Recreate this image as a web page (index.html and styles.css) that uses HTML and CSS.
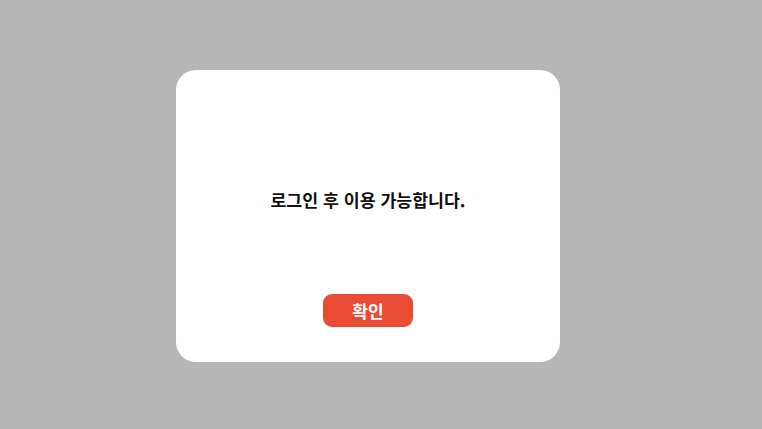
FILE: index.html
```html
<!DOCTYPE html>
<html lang="ko">
<head>
    <meta charset="UTF-8">
    <meta name="viewport" content="width=device-width, initial-scale=1.0">
    <title>알림</title>
    <link rel="stylesheet" href="styles.css">
</head>
<body>
    <div class="overlay">
        <div class="modal">
            <p class="message">로그인 후 이용 가능합니다.</p>
            <button class="confirm">확인</button>
        </div>
    </div>
</body>
</html>
```

FILE: styles.css
```css
html, body {
    margin: 0;
    height: 100%;
}
body {
    font-family: "Noto Sans CJK KR", "Noto Sans", sans-serif;
    background-color: #b7b7b7;
}
.overlay {
    height: 100%;
    display: flex;
    align-items: flex-start;
    padding: 70px 0 0 176px;
    box-sizing: border-box;
}
.modal {
    width: 384px;
    height: 292px;
    box-sizing: border-box;
    background-color: white;
    border-radius: 20px;
    padding-top: 117px;
    display: flex;
    flex-direction: column;
    align-items: center;
}
.message {
    margin: 0;
    font-size: 17.3px;
    font-weight: 700;
    line-height: 26px;
    color: #111;
}
.confirm {
    margin-top: 81px;
    width: 90px;
    height: 33px;
    border: none;
    border-radius: 9px;
    background-color: #e94b35;
    color: white;
    font-family: inherit;
    font-size: 17px;
    font-weight: 700;
    padding: 0;
    line-height: 33px;
    cursor: pointer;
}
```
